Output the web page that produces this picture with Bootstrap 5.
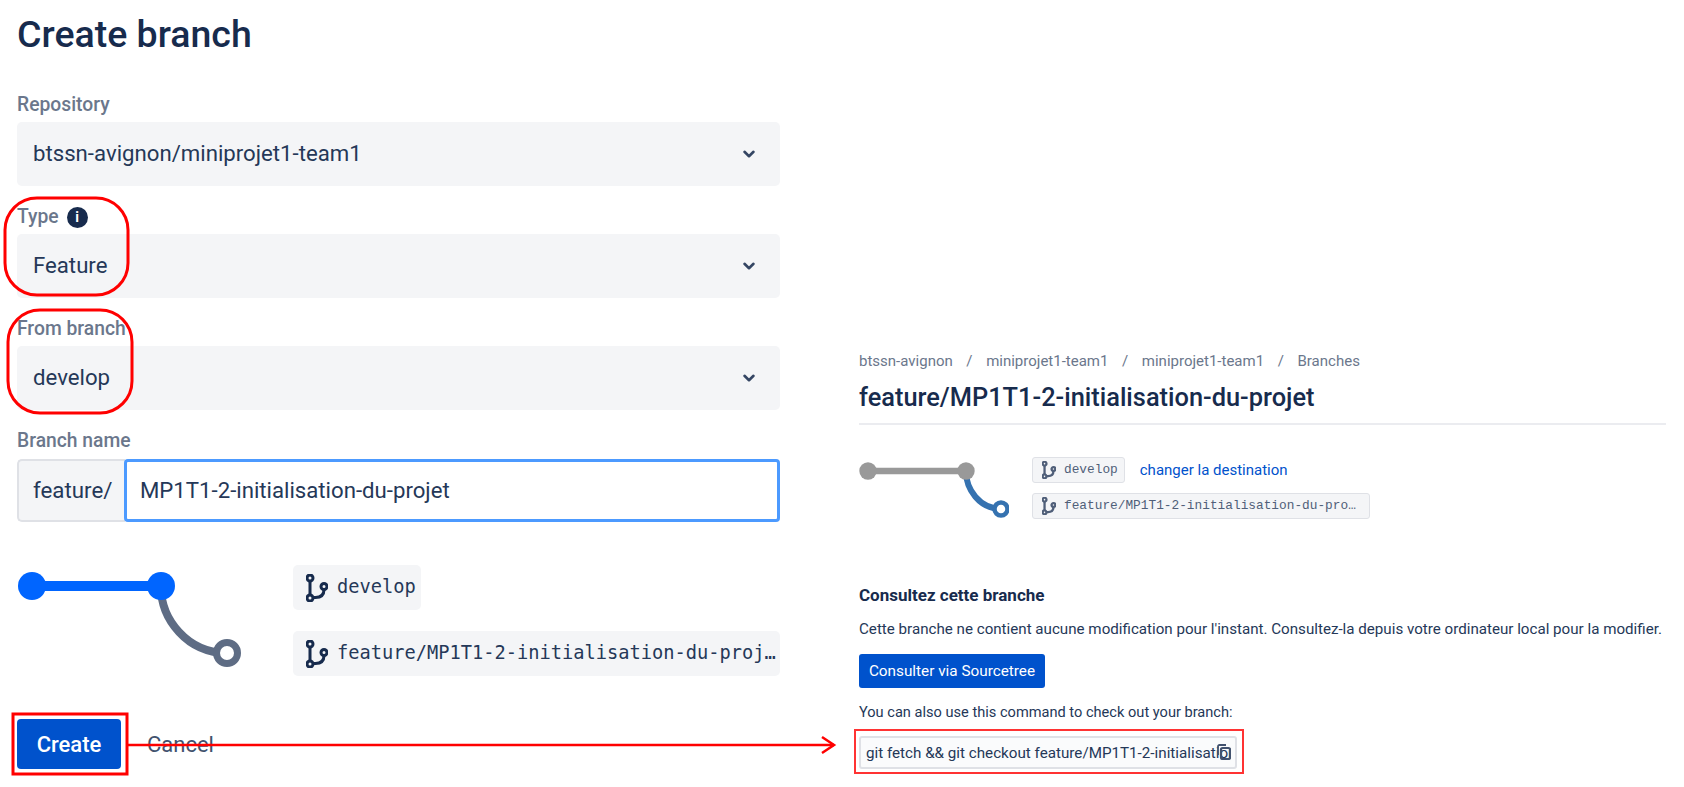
<!DOCTYPE html>
<html lang="en">
<head>
    <meta charset="UTF-8">
    <title>Create branch</title>
    <link rel="stylesheet" href="https://cdn.jsdelivr.net/npm/bootstrap@5.3.0/dist/css/bootstrap.min.css">
    <style>
        body { font-family: Roboto, "Liberation Sans", sans-serif; color: #172b4d; background: #fff; overflow: hidden; }
        .page-wrap { width: 1684px; height: 787px; position: relative; }
        .left-pane { width: 763px; margin-left: 17px; flex: none; }
        .right-pane { width: 807px; margin-left: 79px; padding-top: 352px; flex: none; }
        .create-title { font-size: 37.5px; font-weight: 500; line-height: 42px; margin: 13px 0 0; color: #172b4d; }
        .field-label { display: flex; align-items: center; gap: 8px; font-size: 19.3px; font-weight: 500; color: #6b778c; height: 22px; margin: 0 0 6px; }
        .field-first { margin-top: 39px; }
        .field-next { margin-top: 20px; }
        .field-last { margin-top: 20px; margin-bottom: 7px; }
        .field-select { height: 64px; border: 0; border-radius: 5px; background-color: #f4f5f7; color: #253858; font-size: 22.2px; padding: 0 40px 0 16px; box-shadow: none;
            background-image: url("data:image/svg+xml,%3csvg xmlns='http://www.w3.org/2000/svg' viewBox='0 0 14 14'%3e%3cpath fill='none' stroke='%23344563' stroke-width='2.6' stroke-linecap='round' stroke-linejoin='round' d='M2.5 4.8 7 9.2l4.5-4.4'/%3e%3c/svg%3e");
            background-size: 14px 14px; background-position: right 24px center; }
        .info-dot { width: 21px; height: 21px; border-radius: 50%; background: #172b4d; color: #fff; font-size: 14px; font-weight: 700; line-height: 21px; text-align: center; }
        .name-group { height: 63px; }
        .name-prefix { width: 108px; border: 2px solid #dfe1e6; border-right: 0; background: #f4f5f7; color: #253858; font-size: 22.3px; padding: 0 0 0 14px; border-radius: 5px 0 0 5px; }
        .name-input { border: 3px solid #4c9aff !important; border-radius: 4px !important; color: #253858; font-size: 22.2px; padding: 0 13px; box-shadow: none !important; }
        .flow-row { margin-top: 43px; height: 111px; }
        .flow-graph { width: 276px; flex: none; }
        .flow-tags { width: 487px; gap: 21px; }
        .big-tag { height: 45px; background: #f4f5f7; border-radius: 5px; padding: 0 5px 0 13px; gap: 9px; font-family: "DejaVu Sans Mono", monospace; font-size: 18.7px; color: #253858; white-space: nowrap; }
        .small-tag { height: 26px; border: 1px solid #dfe1e6; background: #f4f5f7; border-radius: 3px; padding: 0 6px 0 9px; gap: 8px; font-family: "Liberation Mono", monospace; font-size: 12.8px; color: #505f79; white-space: nowrap; }
        .ico-big { stroke-width: 3; color: #172b4d; }
        .ico-small { stroke-width: 3.6; }
        .action-row { margin-top: 43px; gap: 26px; }
        .create-btn { width: 104px; height: 50px; background: #0052cc; border: 0; border-radius: 4px; color: #fff; font-size: 22px; font-weight: 500; padding: 0; }
        .cancel-link { font-size: 22px; color: #42526e; text-decoration: none; }
        .crumbs { font-size: 15px; color: #6b778c; line-height: 18px; gap: 13.6px; }
        .branch-title { font-size: 25.4px; font-weight: 500; line-height: 32px; margin: 11px 0 10px; color: #172b4d; }
        .title-rule { height: 2px; background: #ebecf0; }
        .mini-flow { margin-top: 32px; height: 62px; }
        .mini-graph { width: 173px; flex: none; }
        .tag-stack { gap: 10px; }
        .tag-wide { width: 338px; }
        .dest-link { font-size: 15px; color: #0052cc; text-decoration: none; margin-left: 15px; }
        .check-title { font-size: 17px; font-weight: 700; margin: 66px 0 0; line-height: 20px; color: #172b4d; }
        .check-text { font-size: 15.15px; line-height: 20px; margin: 14px 0 0; color: #253858; white-space: nowrap; }
        .check-hint { font-size: 14.6px; }
        .source-btn { width: 186px; height: 34px; background: #0052cc; border: 0; border-radius: 3px; color: #fff; font-size: 15.3px; padding: 0; margin-top: 15px; display: block; }
        .cmd-box { width: 378px; height: 33px; margin-top: 14px; position: relative; }
        .cmd-input { height: 33px; border: 2px solid #dfe1e6; background: #fafbfc; border-radius: 3px; padding: 0 6px 0 5px; font-size: 15.2px; color: #253858; box-shadow: none !important; }
        .cmd-icon { position: absolute; right: 6px; top: 8px; }
        .mark-layer { position: absolute; left: 0; top: 0; pointer-events: none; }
    </style>
</head>
<body>
    <svg width="0" height="0" class="d-block">
        <symbol id="branch-ico" viewBox="0 0 22 28">
            <circle cx="4" cy="4" r="3" fill="none" stroke="currentColor"/>
            <circle cx="4" cy="24" r="3" fill="none" stroke="currentColor"/>
            <circle cx="18" cy="12.5" r="3" fill="none" stroke="currentColor"/>
            <path d="M4 7v14M7 23.5h2.5c5 0 8.500-2.500 8.500-8" fill="none" stroke="currentColor"/>
        </symbol>
    </svg>

    <div class="page-wrap d-flex">
        <!-- Formulaire -->
        <div class="left-pane">
            <h1 class="create-title">Create branch</h1>

            <label class="field-label field-first">Repository</label>
            <select class="form-select field-select"><option>btssn-avignon/miniprojet1-team1</option></select>

            <label class="field-label field-next">Type <span class="info-dot">i</span></label>
            <select class="form-select field-select"><option>Feature</option></select>

            <label class="field-label field-next">From branch</label>
            <select class="form-select field-select"><option>develop</option></select>

            <label class="field-label field-last">Branch name</label>
            <div class="input-group name-group">
                <span class="input-group-text name-prefix">feature/</span>
                <input type="text" class="form-control name-input" value="MP1T1-2-initialisation-du-projet">
            </div>

            <div class="flow-row d-flex">
                <div class="flow-graph">
                    <svg width="240" height="112" viewBox="0 0 240 112">
                        <path d="M144 22c0 32 26 66 66 66" fill="none" stroke="#5e6c84" stroke-width="8"/>
                        <path d="M15 21h129" stroke="#0065ff" stroke-width="10"/>
                        <circle cx="15" cy="21" r="14" fill="#0065ff"/>
                        <circle cx="144" cy="21" r="14" fill="#0065ff"/>
                        <circle cx="210" cy="88" r="10.500" fill="#fff" stroke="#5e6c84" stroke-width="7"/>
                    </svg>
                </div>
                <div class="flow-tags d-flex flex-column align-items-start">
                    <div class="big-tag d-flex align-items-center"><svg class="ico-big" width="22" height="28"><use href="#branch-ico"/></svg><span>develop</span></div>
                    <div class="big-tag d-flex align-items-center w-100"><svg class="ico-big flex-shrink-0" width="22" height="28"><use href="#branch-ico"/></svg><span>feature/MP1T1-2-initialisation-du-proj…</span></div>
                </div>
            </div>

            <div class="action-row d-flex align-items-center">
                <button type="button" class="btn create-btn">Create</button>
                <a href="#" class="cancel-link">Cancel</a>
            </div>
        </div>

        <!-- Page de la branche -->
        <div class="right-pane">
            <div class="crumbs d-flex">
                <span>btssn-avignon</span><span>/</span><span>miniprojet1-team1</span><span>/</span><span>miniprojet1-team1</span><span>/</span><span>Branches</span>
            </div>
            <h2 class="branch-title">feature/MP1T1-2-initialisation-du-projet</h2>
            <div class="title-rule"></div>

            <div class="mini-flow d-flex">
                <div class="mini-graph">
                    <svg width="150" height="64" viewBox="0 0 150 64">
                        <path d="M107 14c0 18 13 38 36 38" fill="none" stroke="#3572b0" stroke-width="6"/>
                        <path d="M9 14h98" stroke="#999" stroke-width="6.500"/>
                        <circle cx="9" cy="14" r="8.700" fill="#999"/>
                        <circle cx="107" cy="14" r="8.700" fill="#999"/>
                        <circle cx="142" cy="52" r="6.500" fill="#fff" stroke="#3572b0" stroke-width="4.500"/>
                    </svg>
                </div>
                <div class="tag-stack d-flex flex-column align-items-start flex-grow-1">
                    <div class="d-flex align-items-center">
                        <div class="small-tag d-flex align-items-center"><svg class="ico-small" width="14" height="18"><use href="#branch-ico"/></svg><span>develop</span></div>
                        <a href="#" class="dest-link">changer la destination</a>
                    </div>
                    <div class="small-tag tag-wide d-flex align-items-center"><svg class="ico-small flex-shrink-0" width="14" height="18"><use href="#branch-ico"/></svg><span>feature/MP1T1-2-initialisation-du-pro…</span></div>
                </div>
            </div>

            <h3 class="check-title">Consultez cette branche</h3>
            <p class="check-text">Cette branche ne contient aucune modification pour l'instant. Consultez-la depuis votre ordinateur local pour la modifier.</p>
            <button type="button" class="btn source-btn">Consulter via Sourcetree</button>
            <p class="check-text check-hint">You can also use this command to check out your branch:</p>
            <div class="cmd-box">
                <input type="text" class="form-control cmd-input" readonly value="git fetch &amp;&amp; git checkout feature/MP1T1-2-initialisation-du-projet">
                <svg class="cmd-icon" width="14" height="16" viewBox="0 0 14 16"><path d="M1 11V2.500C1 1.700 1.700 1 2.500 1H9" fill="none" stroke="#42526e" stroke-width="1.800"/><rect x="4" y="4" width="9" height="11" rx="1.500" fill="none" stroke="#42526e" stroke-width="2.200"/></svg>
            </div>
        </div>

        <!-- Annotations rouges -->
        <svg class="mark-layer" width="1684" height="787" viewBox="0 0 1684 787" fill="none" stroke="#f00">
            <rect x="5" y="198" width="123" height="97" rx="32" stroke-width="3"/>
            <rect x="8" y="310" width="124" height="103" rx="32" stroke-width="3"/>
            <rect x="13" y="714" width="114" height="60" stroke-width="3"/>
            <path d="M128 745h706" stroke-width="2.500"/>
            <path d="M822 737l12 8-12 8" stroke-width="2.500"/>
            <rect x="855" y="730" width="388" height="43" stroke="#f33" stroke-width="2"/>
        </svg>
    </div>

    <script src="https://cdn.jsdelivr.net/npm/bootstrap@5.3.0/dist/js/bootstrap.bundle.min.js"></script>
</body>
</html>
